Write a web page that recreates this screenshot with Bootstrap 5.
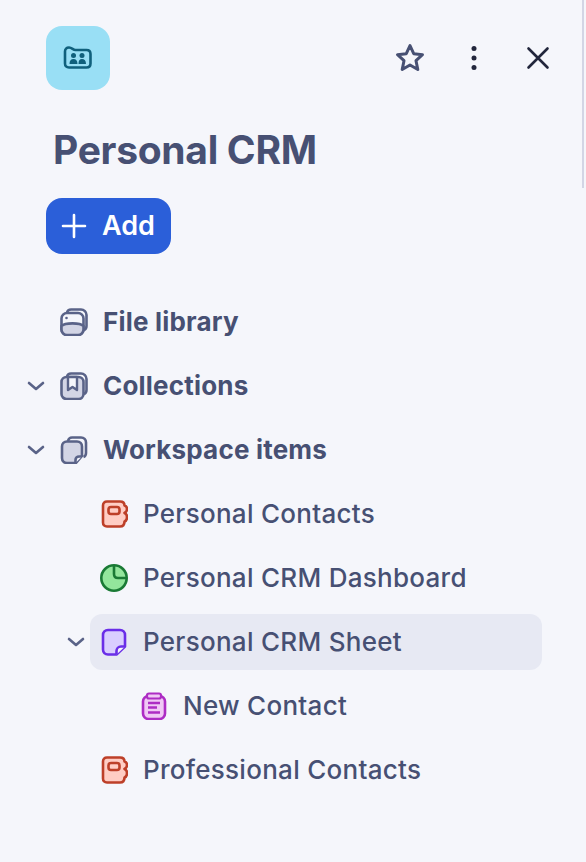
<!DOCTYPE html>
<html lang="en">
<head>
    <meta charset="UTF-8">
    <meta name="viewport" content="width=device-width, initial-scale=1.0">
    <title>Personal CRM</title>
    <link href="https://cdn.jsdelivr.net/npm/bootstrap@5.3.3/dist/css/bootstrap.min.css" rel="stylesheet">
    <script defer src="https://cdn.jsdelivr.net/npm/bootstrap@5.3.3/dist/js/bootstrap.bundle.min.js"></script>
    <style>
        html, body { height: 100%; }
        body { background: #f5f6fb; font-family: "Inter", "Liberation Sans", sans-serif; color: #475073; overflow: hidden; }
        .side-edge { border-right: 2px solid #d3d5e5; height: 188px; width: 584px; position: absolute; top: 0; left: 0; pointer-events: none; }
        .side-head { padding: 26px 32px 0 46px; height: 90px; }
        .app-logo { width: 64px; height: 64px; border-radius: 16px; background: #99dff5; }
        .head-btn { width: 32px; height: 32px; padding: 0; border: 0; background: none; }
        .head-actions { gap: 32px; margin-top: -1px; }
        .side-title { font-size: 39px; font-weight: 700; line-height: 48px; margin: 36px 0 0 53px; color: #475073; letter-spacing: -0.3px; }
        .add-btn { margin: 24px 0 0 46px; height: 56px; width: 125px; border-radius: 16px; background: #2b5fd9; border: 0; color: #fff; font-size: 27px; font-weight: 600; gap: 14px; padding: 0 0 0 14px; }
        .add-btn:hover { background: #2b5fd9; color: #fff; }
        .tree { padding: 40px 44px 0 24px; gap: 8px; }
        .tree-row { height: 56px; }
        .lvl-1 { padding-left: 40px; }
        .lvl-2 { padding-left: 80px; }
        .chev { width: 24px; margin-right: 2px; flex: none; }
        .tree-item { height: 56px; padding-left: 10px; gap: 15px; border-radius: 12px; font-size: 26px; font-weight: 500; letter-spacing: 0.28px; line-height: 1; white-space: nowrap; }
        .tree-item.sel { background: #e7e9f3; }
        .tree-item.top { font-weight: 700; letter-spacing: 0.2px; }
        .tree-item svg { flex: none; }
    </style>
</head>
<body>
    <div class="side-edge"></div>

    <div class="side-head d-flex justify-content-between align-items-center">
        <div class="app-logo d-flex align-items-center justify-content-center">
            <svg width="30" height="28" viewBox="0 0 30 28" fill="none">
                <path d="M2 7.500C2 5 3.500 3.500 6 3.500C9 3.500 10 6 12.500 6H23.500C26 6 27.500 7.500 27.500 10V19.500C27.500 22 26 23.500 23.500 23.500H6C3.500 23.500 2 22 2 19.500Z" fill="#99dff5" stroke="#10607c" stroke-width="2.600"/>
                <circle cx="10.500" cy="11.500" r="2.500" fill="#10607c"/>
                <circle cx="19" cy="11.500" r="2.500" fill="#10607c"/>
                <path d="M6.500 20C6.500 16.500 8 15 10.500 15C13 15 14.500 16.500 14.500 20ZM15.500 20C15.500 16.500 16.500 15 19 15C21.500 15 23 16.500 23 20Z" fill="#10607c"/>
            </svg>
        </div>
        <div class="head-actions d-flex align-items-center">
            <button class="head-btn" aria-label="Favourite">
                <svg width="32" height="32" viewBox="0 0 32 32" fill="none"><path d="M16 3.500L19.700 11.700L28.500 12.700L22 18.700L23.800 27.500L16 23L8.200 27.500L10 18.700L3.500 12.700L12.300 11.700Z" stroke="#475073" stroke-width="3" stroke-linejoin="round"/></svg>
            </button>
            <button class="head-btn" aria-label="More">
                <svg width="32" height="32" viewBox="0 0 32 32" fill="#22263c"><circle cx="16" cy="6.500" r="2.500"/><circle cx="16" cy="16" r="2.500"/><circle cx="16" cy="25.500" r="2.500"/></svg>
            </button>
            <button class="head-btn" aria-label="Close">
                <svg width="32" height="32" viewBox="0 0 32 32" fill="none"><path d="M6.500 6.500L25.500 25.500M25.500 6.500L6.500 25.500" stroke="#22263c" stroke-width="2.600" stroke-linecap="round"/></svg>
            </button>
        </div>
    </div>

    <h1 class="side-title">Personal CRM</h1>

    <button class="btn add-btn d-flex align-items-center">
        <svg width="28" height="28" viewBox="0 0 28 28" fill="none"><path d="M14 3V25M3 14H25" stroke="#fff" stroke-width="2.600" stroke-linecap="round"/></svg>
        Add
    </button>

    <div class="tree d-flex flex-column">
        <div class="tree-row d-flex align-items-center">
            <span class="chev"></span>
            <div class="tree-item top flex-grow-1 d-flex align-items-center">
                <svg width="28" height="28" viewBox="0 0 28 28" fill="none">
                    <path d="M7 4.500C7.500 2.500 9 1.500 11 1.500H21C24 1.500 26.500 4 26.500 7V18C26.500 20 25.500 21.500 24 22" stroke="#5a6388" stroke-width="2.600"/>
                    <rect x="1.500" y="5" width="22" height="22" rx="5.500" fill="#f5f6fb" stroke="#5a6388" stroke-width="2.600"/>
                    <path d="M1.500 18C5 14.500 20 14.500 23.500 18V21.500C23.500 24.500 21 27 18 27H7C4 27 1.500 24.500 1.500 21.500Z" fill="#d3d5e5" stroke="#5a6388" stroke-width="2.600"/>
                    <circle cx="6.500" cy="10" r="1.300" fill="#5a6388"/>
                </svg>
                File library
            </div>
        </div>

        <div class="tree-row d-flex align-items-center">
            <span class="chev d-flex justify-content-center">
                <svg width="18" height="10" viewBox="0 0 18 10" fill="none"><path d="M2 2L9 8L16 2" stroke="#5a6388" stroke-width="2.600" stroke-linecap="round" stroke-linejoin="round"/></svg>
            </span>
            <div class="tree-item top flex-grow-1 d-flex align-items-center">
                <svg width="28" height="28" viewBox="0 0 28 28" fill="none">
                    <path d="M7 4.500C7.500 2.500 9 1.500 11 1.500H21C24 1.500 26.500 4 26.500 7V18C26.500 20 25.500 21.500 24 22" stroke="#5a6388" stroke-width="2.600"/>
                    <rect x="1.500" y="5" width="22" height="22" rx="5" fill="#d3d5e5" stroke="#5a6388" stroke-width="2.600"/>
                    <path d="M8 5V18L12.500 15L17 18V5Z" fill="#f5f6fb" stroke="#5a6388" stroke-width="2.400" stroke-linejoin="round"/>
                </svg>
                Collections
            </div>
        </div>

        <div class="tree-row d-flex align-items-center">
            <span class="chev d-flex justify-content-center">
                <svg width="18" height="10" viewBox="0 0 18 10" fill="none"><path d="M2 2L9 8L16 2" stroke="#5a6388" stroke-width="2.600" stroke-linecap="round" stroke-linejoin="round"/></svg>
            </span>
            <div class="tree-item top flex-grow-1 d-flex align-items-center">
                <svg width="28" height="28" viewBox="0 0 28 28" fill="none">
                    <path d="M8 5C8.500 2.800 10 1.500 12 1.500H21C24 1.500 26 3.500 26 6.500V17C26 19 25 20.500 23.500 21" stroke="#5a6388" stroke-width="2.600"/>
                    <path d="M7 5.500H17C20 5.500 22 7.500 22 10.500V20L16 27H7C4 27 2 25 2 22V10.500C2 7.500 4 5.500 7 5.500Z" fill="#d3d5e5" stroke="#5a6388" stroke-width="2.600" stroke-linejoin="round"/>
                    <path d="M22 20.500H19C17 20.500 15.500 22 15.500 24V27" fill="#f5f6fb" stroke="#5a6388" stroke-width="2.600"/>
                </svg>
                Workspace items
            </div>
        </div>

        <div class="tree-row lvl-1 d-flex align-items-center">
            <span class="chev"></span>
            <div class="tree-item flex-grow-1 d-flex align-items-center">
                <svg width="28" height="28" viewBox="0 0 28 28" fill="none">
                    <path d="M7 1.500H20C23 1.500 24.500 3 24.500 5.500C26.500 6 27 7.500 27 9C27 11 25.500 12.500 24.500 13C26 13.500 27 15 27 17C27 19.500 26 21 24.500 21.500C24.500 24.500 23 26.500 20 26.500H7C4.500 26.500 3 25 3 22.500V5.500C3 3 4.500 1.500 7 1.500Z" fill="#ffcdc4" stroke="#bd3f28" stroke-width="2.600" stroke-linejoin="round"/>
                    <rect x="8.500" y="7" width="11" height="7" rx="2.500" stroke="#bd3f28" stroke-width="2.600"/>
                </svg>
                Personal Contacts
            </div>
        </div>

        <div class="tree-row lvl-1 d-flex align-items-center">
            <span class="chev"></span>
            <div class="tree-item flex-grow-1 d-flex align-items-center">
                <svg width="28" height="28" viewBox="0 0 28 28" fill="none">
                    <circle cx="14" cy="14" r="12.700" fill="#93e69c" stroke="#1a7a35" stroke-width="2.600"/>
                    <path d="M14 1.500V10C14 12.500 15.500 14 18 14H26.500" stroke="#1a7a35" stroke-width="2.600"/>
                </svg>
                Personal CRM Dashboard
            </div>
        </div>

        <div class="tree-row lvl-1 d-flex align-items-center">
            <span class="chev d-flex justify-content-center">
                <svg width="18" height="10" viewBox="0 0 18 10" fill="none"><path d="M2 2L9 8L16 2" stroke="#5a6388" stroke-width="2.600" stroke-linecap="round" stroke-linejoin="round"/></svg>
            </span>
            <div class="tree-item sel flex-grow-1 d-flex align-items-center">
                <svg width="28" height="28" viewBox="0 0 28 28" fill="none">
                    <path d="M8 2H20C23 2 25 4 25 7V18.500L16.500 26.500H8C5 26.500 3 24.500 3 21.500V7C3 4 5 2 8 2Z" fill="#d9ceff" stroke="#6a2ee8" stroke-width="2.600" stroke-linejoin="round"/>
                    <path d="M25 18.500H21C18.500 18.500 16.500 20.500 16.500 23V26.500" fill="#f5f6fb" stroke="#6a2ee8" stroke-width="2.600"/>
                </svg>
                Personal CRM Sheet
            </div>
        </div>

        <div class="tree-row lvl-2 d-flex align-items-center">
            <span class="chev"></span>
            <div class="tree-item flex-grow-1 d-flex align-items-center">
                <svg width="28" height="28" viewBox="0 0 28 28" fill="none">
                    <rect x="3" y="4" width="22" height="23" rx="5.500" fill="#f0c8f5" stroke="#ad2cc4" stroke-width="2.600"/>
                    <rect x="7" y="1.500" width="14" height="5" rx="2" fill="#f0c8f5" stroke="#ad2cc4" stroke-width="2.200"/>
                    <path d="M8 11H20M8 15.500H17M8 20.500H20" stroke="#ad2cc4" stroke-width="2.400"/>
                </svg>
                New Contact
            </div>
        </div>

        <div class="tree-row lvl-1 d-flex align-items-center">
            <span class="chev"></span>
            <div class="tree-item flex-grow-1 d-flex align-items-center">
                <svg width="28" height="28" viewBox="0 0 28 28" fill="none">
                    <path d="M7 1.500H20C23 1.500 24.500 3 24.500 5.500C26.500 6 27 7.500 27 9C27 11 25.500 12.500 24.500 13C26 13.500 27 15 27 17C27 19.500 26 21 24.500 21.500C24.500 24.500 23 26.500 20 26.500H7C4.500 26.500 3 25 3 22.500V5.500C3 3 4.500 1.500 7 1.500Z" fill="#ffcdc4" stroke="#bd3f28" stroke-width="2.600" stroke-linejoin="round"/>
                    <rect x="8.500" y="7" width="11" height="7" rx="2.500" stroke="#bd3f28" stroke-width="2.600"/>
                </svg>
                Professional Contacts
            </div>
        </div>
    </div>
</body>
</html>
